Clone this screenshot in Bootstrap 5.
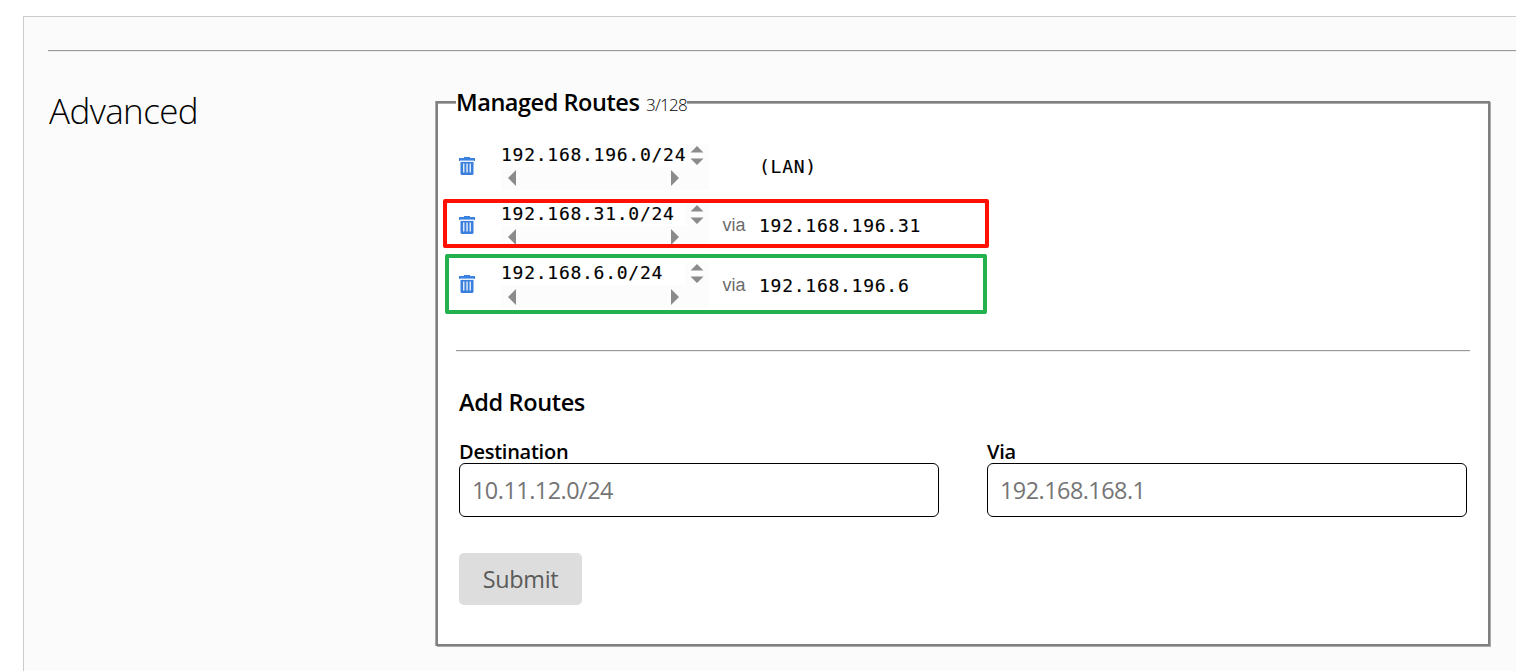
<!DOCTYPE html>
<html lang="en">
<head>
<meta charset="utf-8">
<meta name="viewport" content="width=device-width, initial-scale=1">
<title>Advanced</title>
<link href="https://cdn.jsdelivr.net/npm/bootstrap@5.3.0/dist/css/bootstrap.min.css" rel="stylesheet">
<script src="https://cdn.jsdelivr.net/npm/bootstrap@5.3.0/dist/js/bootstrap.bundle.min.js"></script>
<style>
body{font-family:"Open Sans","Noto Sans",sans-serif;color:#000;background:#fff;overflow:hidden}
.panel{margin:16px 0 0 23px;height:655px;border:1px solid #ccc;border-width:1px 0 0 1px;background:#fbfbfb;padding:33px 0 0 24px}
.rule{height:2px;border-top:1px solid #9a9a9a;border-bottom:1px solid #eee}
.panel-body{padding:49px 26px 0 0}
.side{width:388px;flex:none}
.side h2{font-weight:300;font-size:35px;letter-spacing:-.6px;line-height:42px;margin:-11px 0 0 1px}
.routes{height:545px;border:2px solid gray;box-shadow:-1px 0 #aaa,1px 1px #aaa,inset 0 1px #aaa;background:#fff;padding:0 18px}
.routes-title{margin-top:-17px;height:32px;width:231px;line-height:32px;font-size:23.5px;font-weight:600;letter-spacing:-.45px;background:linear-gradient(#fbfbfb 0 15px,#fff 15px);white-space:nowrap}
.routes-title small{font-size:17px;font-weight:300;letter-spacing:-.75px;margin-left:1px}
.route-list{padding-top:19px}
.route{height:59.3px}
.del{width:16px;height:19px;margin-left:3px;margin-top:-1px;display:block}
.dest{width:208px;height:46px;margin-left:26px;background:#fcfcfc}
.mono{font-family:"DejaVu Sans Mono",monospace;font-size:18px;letter-spacing:.74px;white-space:nowrap;-webkit-text-stroke:.15px #000}
.dest .mono{width:185px;height:23px;line-height:22px;background:#fff}
.bar{height:23px;padding:0 30px 0 7px}
.via{width:50px;padding-left:13.5px;font-family:"Liberation Sans",Arial,sans-serif;font-size:18px;color:#6b6b6b}
.mark-box{position:absolute;border:4px solid;border-radius:2px}
.mark-red{left:5px;top:96px;width:546px;height:49px;border-color:#ff1000}
.mark-green{left:7px;top:151px;width:542px;height:60px;border-color:#22b14c}
#divider{margin-top:35px}
.add{padding:0 3px}
.add h3{font-size:23.5px;font-weight:600;letter-spacing:-.35px;line-height:32px;margin:34px 0 24px}
.add label{display:block;font-size:20px;font-weight:600;letter-spacing:-.25px;line-height:20px;height:21px}
.add .form-control{height:54px;border:1px solid #000;border-radius:6px;padding:0 12px;font-size:23.4px;letter-spacing:-.5px;color:#000}
.add .form-control::placeholder{color:#757575;opacity:1}
#gateway{letter-spacing:-.52px}
.fields{gap:48px}
.send{margin-top:36px;width:123px;height:52px;border:0;border-radius:5px;background:#ddd;color:#5a5a5a;font-size:23.4px;letter-spacing:-.3px;padding:2px 0 0}
</style>
</head>
<body>
<svg class="d-none">
  <symbol id="trash" viewBox="0 0 16 19"><path fill="#3b82e0" d="M5 0h6v1h5v3H0V1h5z"/><path fill="#8bb5ec" d="M1 3h14v1.200H1z"/><path fill="#3b7fdd" d="M1.500 5h13v11.500a1.500 1.500 0 0 1-1.500 1.500H3a1.500 1.500 0 0 1-1.500-1.500z"/><path fill="#dbe8fa" d="M4 6.500h1.500v9H4zM7.300 6.500h1.500v9H7.300zM10.500 6.500H12v9h-1.500z"/></symbol>
</svg>
<main class="panel">
  <div class="rule"></div>
  <div class="panel-body d-flex">
    <div class="side"><h2>Advanced</h2></div>
    <section class="routes position-relative flex-grow-1">
      <div class="routes-title">Managed Routes <small>3/128</small></div>
      <div class="route-list" id="routes"></div>
      <div class="mark-box mark-red"></div>
      <div class="mark-box mark-green"></div>
      <div class="rule" id="divider"></div>
      <form class="add">
        <h3>Add Routes</h3>
        <div class="d-flex fields">
          <div class="flex-fill"><label for="target">Destination</label><input id="target" class="form-control" placeholder="10.11.12.0/24"></div>
          <div class="flex-fill"><label for="gateway">Via</label><input id="gateway" class="form-control" placeholder="192.168.168.1"></div>
        </div>
        <button type="button" class="btn send">Submit</button>
      </form>
    </section>
  </div>
</main>
<script>
const routes = [["192.168.196.0/24", "", "(LAN)"], ["192.168.31.0/24", "via", "192.168.196.31"], ["192.168.6.0/24", "via", "192.168.196.6"]];
document.getElementById("routes").innerHTML = routes.map(([d, v, g]) => `
<div class="route d-flex align-items-center">
  <svg class="del"><use href="#trash"/></svg>
  <div class="dest">
    <div class="d-flex"><div class="mono">${d}</div>
      <svg width="23" height="23" fill="#8b8b8b"><path d="M4.500 8.500 11 2l6.500 6.500zM4.500 14.500h13L11 21z"/></svg></div>
    <div class="bar d-flex justify-content-between align-items-center">
      <svg width="8" height="16" fill="#8b8b8b"><path d="M8 0v16L0 8z"/></svg>
      <svg width="8" height="16" fill="#8b8b8b"><path d="M0 0v16l8-8z"/></svg></div>
  </div>
  <div class="via">${v}</div><div class="mono">${g}</div>
</div>`).join("");
</script>
</body>
</html>
